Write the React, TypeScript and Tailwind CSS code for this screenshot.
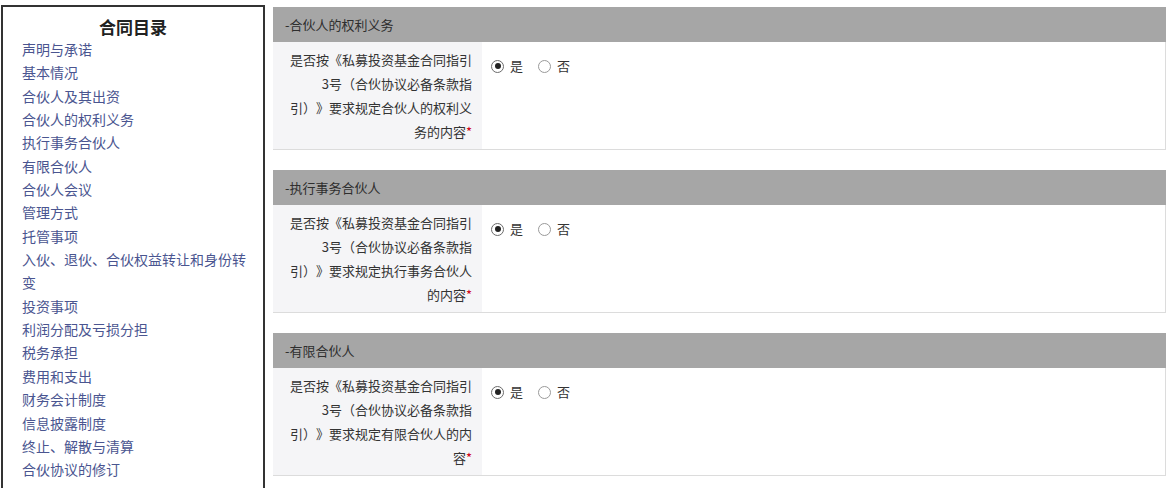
import React from 'react';

const TOC = [
  '声明与承诺',
  '基本情况',
  '合伙人及其出资',
  '合伙人的权利义务',
  '执行事务合伙人',
  '有限合伙人',
  '合伙人会议',
  '管理方式',
  '托管事项',
  '入伙、退伙、合伙权益转让和身份转变',
  '投资事项',
  '利润分配及亏损分担',
  '税务承担',
  '费用和支出',
  '财务会计制度',
  '信息披露制度',
  '终止、解散与清算',
  '合伙协议的修订',
];

const HEAD = ['是否按《私募投资基金合同指引', '3号（合伙协议必备条款指'];

const SECTIONS = [
  { title: '-合伙人的权利义务', lines: [...HEAD, '引）》要求规定合伙人的权利义', '务的内容'] },
  { title: '-执行事务合伙人', lines: [...HEAD, '引）》要求规定执行事务合伙人', '的内容'] },
  { title: '-有限合伙人', lines: [...HEAD, '引）》要求规定有限合伙人的内', '容'] },
];

function Radio({ checked, text }: { checked?: boolean; text: string }) {
  return (
    <span className="flex items-center">
      <span
        className={`flex h-[13px] w-[13px] items-center justify-center rounded-full border bg-white ${
          checked ? 'border-[#6b6b6b]' : 'border-[#9a9a9a]'
        }`}
      >
        {checked && <span className="h-[6px] w-[6px] rounded-full bg-[#222]" />}
      </span>
      <span className="ml-[6px] text-[13px] text-[#333]">{text}</span>
    </span>
  );
}

export default function App() {
  return (
    <div
      className="flex h-[488px] items-start overflow-hidden bg-white pl-[1px] pt-[5px] [text-spacing-trim:space-all]"
      style={{ fontFamily: '"Noto Sans CJK SC", "Liberation Sans", sans-serif' }}
    >
      {/* Contract table of contents */}
      <div className="w-[264px] shrink-0 border-[2.5px] border-[#333] pb-[30px] pl-[19px] pr-[10px] pt-[8px]">
        <h2 className="-ml-[19px] -mr-[10px] text-center text-[17px] font-bold leading-[24px] text-[#222]">合同目录</h2>
        <ul className="-mt-[1px] text-[14px] leading-[23.35px] text-[#4a5590]">
          {TOC.map((t) => (
            <li key={t}>{t}</li>
          ))}
        </ul>
      </div>

      {/* Form sections */}
      <div className="ml-[8px] mt-[2px] flex flex-1 flex-col gap-[20px] pr-[1px]">
        {SECTIONS.map((s) => (
          <div key={s.title}>
            <div className="flex h-[35px] items-center bg-[#a6a6a6] px-[12px] text-[13px] text-[#2e2e2e]">{s.title}</div>
            <div className="flex h-[108px] border-b border-r border-[#dcdcdc]">
              <div className="w-[209px] shrink-0 bg-[#f5f5f7] pl-[10px] pr-[10px] pt-[6px] text-right text-[13px] leading-[24px] text-[#333]">
                {s.lines.map((l, i) => (
                  <div key={i} className="whitespace-nowrap">
                    {l}
                    {i === s.lines.length - 1 && <span className="text-[#d0021b]">*</span>}
                  </div>
                ))}
              </div>
              <div className="flex h-fit items-center gap-[15px] pl-[9px] pt-[12px] leading-[24px]">
                <Radio checked text="是" />
                <Radio text="否" />
              </div>
            </div>
          </div>
        ))}
      </div>
    </div>
  );
}
